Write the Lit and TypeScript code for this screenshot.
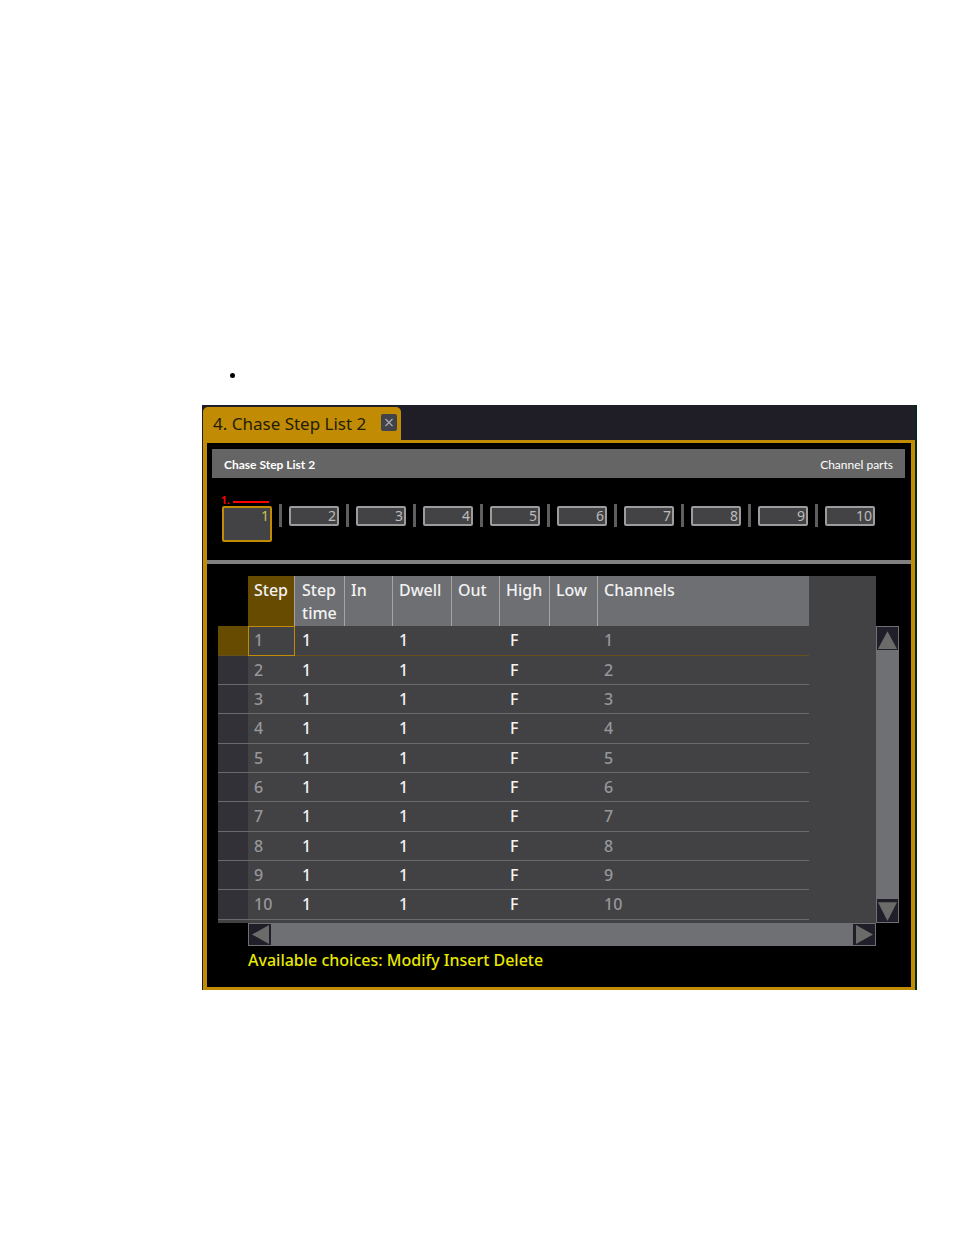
import { LitElement, html, css, svg } from "lit";
import { customElement, state } from "lit/decorators.js";

type Direction = "up" | "down" | "left" | "right";

const ARROWS: Record<Direction, string> = {
  up: "M11 4 L21 21 H1 Z",
  down: "M1 3 H21 L11 21 Z",
  left: "M3 11 L20 1 V21 Z",
  right: "M3 1 L20 11 L3 21 Z",
};

interface Step {
  step: number;
  time: string;
  fadeIn: string;
  dwell: string;
  fadeOut: string;
  high: string;
  low: string;
  channels: string;
}

const STEPS: Step[] = Array.from({ length: 10 }, (_, i) => ({
  step: i + 1,
  time: "1",
  fadeIn: "",
  dwell: "1",
  fadeOut: "",
  high: "F",
  low: "",
  channels: String(i + 1),
}));

@customElement("scroll-bar")
export class ScrollBar extends LitElement {
  static properties = { vertical: { type: Boolean, reflect: true } };
  declare vertical: boolean;

  static styles = css`
    :host {
      display: flex;
      box-sizing: border-box;
      background: #6f7073;
    }
    :host([vertical]) {
      flex-direction: column;
    }
    .track {
      flex: 1;
    }
    .arrow {
      display: block;
      box-sizing: border-box;
      width: 24px;
      height: 23px;
      padding: 0;
      border: 1px solid #6f7073;
      background: #1f1e29;
    }
    :host([vertical]) .arrow {
      width: 23px;
      height: 25px;
    }
    .glyph {
      display: block;
      width: 100%;
      height: 100%;
      fill: #6b6b69;
    }
  `;

  private arrow(direction: Direction) {
    return html`<button class="arrow" type="button" aria-label="Scroll ${direction}">
      <svg class="glyph" viewBox="0 0 22 22" preserveAspectRatio="none" aria-hidden="true">
        ${svg`<path d=${ARROWS[direction]} />`}
      </svg>
    </button>`;
  }

  render() {
    return html`
      ${this.arrow(this.vertical ? "up" : "left")}
      <div class="track"></div>
      ${this.arrow(this.vertical ? "down" : "right")}
    `;
  }
}

@customElement("app-root")
export class AppRoot extends LitElement {
  @state() private selected = 1;

  static styles = css`
    :host {
      display: block;
      background: #fff;
      font-family: "Noto Sans", "Open Sans", sans-serif;
    }
    .page {
      padding: 365px 37px 0 202px;
    }
    .notes {
      margin: 0 0 20px;
      padding: 0 0 0 44px;
      font: 16px/20px "Liberation Serif", serif;
      color: #000;
    }
    .window {
      padding: 2px 0 0 1px;
      background: #1f1e27;
      border-right: 2px solid #042a1c;
    }
    button {
      font-family: inherit;
      cursor: pointer;
    }
    .tab {
      display: flex;
      align-items: flex-start;
      justify-content: space-between;
      box-sizing: border-box;
      width: 198px;
      height: 33px;
      padding: 7px 4px 0 10px;
      border-radius: 5px 5px 0 0;
      background: #c18c04;
    }
    .tab-name {
      padding: 0;
      border: 0;
      background: none;
      color: #241d08;
      font-size: 17px;
      line-height: 20px;
      white-space: nowrap;
    }
    .close {
      width: 16px;
      height: 17px;
      padding: 0;
      border: 0;
      border-radius: 2px;
      background: #42434a;
    }
    .close-glyph {
      display: block;
      width: 16px;
      height: 17px;
      stroke: #a9a9ac;
      stroke-width: 1.3;
    }
    .panel {
      border: 4px solid #c18c04;
      border-top-width: 3px;
      border-bottom-width: 3px;
      background: #000;
    }
    .title-bar {
      display: flex;
      justify-content: space-between;
      align-items: center;
      height: 29px;
      margin: 6px 6px 0 5px;
      padding: 2px 12px 0;
      box-sizing: border-box;
      background: #656565;
      color: #fff;
      font-family: Lato, sans-serif;
      font-size: 12px;
      line-height: 16px;
    }
    .title {
      margin: 0;
      font-size: 12px;
      font-weight: 700;
    }
    .cues {
      display: flex;
      align-items: flex-start;
      gap: 7px;
      height: 56px;
      padding: 26px 15px 0;
      overflow: hidden;
    }
    .divider {
      width: 3px;
      height: 23px;
      background: #5e5e5e;
    }
    .cue-slot {
      position: relative;
      padding-top: 2px;
    }
    .cue {
      display: block;
      box-sizing: border-box;
      width: 50px;
      height: 20px;
      padding: 0 1px 0 0;
      border: 2px solid #9c9c9e;
      border-radius: 2px;
      background: #434345;
      color: #bcbcbc;
      font-size: 14px;
      line-height: 16px;
      text-align: right;
    }
    .cue.active {
      display: flex;
      justify-content: flex-end;
      height: 36px;
      border-color: #c18c04;
      color: #c9c453;
    }
    .part {
      position: absolute;
      left: -1px;
      right: 3px;
      top: -10px;
      display: flex;
      align-items: center;
      gap: 3px;
      color: #f00;
      font-size: 10px;
      font-weight: 700;
      line-height: 12px;
    }
    .part-line {
      flex: 1;
      height: 2px;
      margin-top: 3px;
      background: #f00;
    }
    .rule {
      height: 4px;
      margin: 0;
      border: 0;
      background: #808080;
    }
    .body {
      padding: 12px 12px 15px 11px;
    }
    .sheet {
      display: flex;
    }
    .grid-wrap {
      flex: 1;
      min-width: 0;
      padding-bottom: 3px;
      background: #424244;
    }
    .grid {
      width: 100%;
      border-collapse: separate;
      border-spacing: 0;
      table-layout: fixed;
      font-size: 16px;
      line-height: 23px;
    }
    .grid th,
    .grid td {
      box-sizing: border-box;
      padding: 0 0 0 6px;
      text-align: left;
      white-space: nowrap;
    }
    .c-gutter { width: 30px; }
    .c-step { width: 47px; }
    .c-time { width: 50px; }
    .c-in { width: 48px; }
    .c-dwell { width: 59px; }
    .c-out { width: 48px; }
    .c-high { width: 50px; }
    .c-low { width: 48px; }
    .c-channels { width: 211px; }
    .head th {
      height: 50px;
      padding: 3px 0 1px 6px;
      border-right: 1px solid #a4a4a6;
      background: #6e6f72;
      color: #f2f2f2;
      font-weight: 500;
      vertical-align: top;
    }
    .head th.wrap {
      padding-left: 7px;
      white-space: normal;
    }
    .head th.current {
      background: #664b00;
    }
    .head th.last {
      border-right: 0;
    }
    .head .corner {
      border: 0;
      background: #000;
    }
    .grid .blank {
      border: 0;
      background: #424244;
    }
    .row td,
    .row th {
      height: 29px;
      border-bottom: 1px solid #6a6a6d;
      color: #f4f4f4;
      font-weight: 500;
    }
    .row:nth-child(3n + 1) td,
    .row:nth-child(3n + 1) th {
      height: 30px;
    }
    .row .gutter {
      background: #333138;
    }
    .row .muted {
      color: #97979a;
      font-weight: 500;
    }
    .row .time {
      padding-left: 7px;
    }
    .row .level {
      padding-left: 10px;
    }
    .row.selected td {
      border-bottom-color: #66501c;
    }
    .row.selected .gutter {
      background: #664b00;
    }
    .row.selected .cursor {
      padding: 0 0 1px 5px;
      border: 1px solid #c18c04;
    }
    .v-bar {
      width: 23px;
      margin-top: 50px;
    }
    .h-bar {
      height: 23px;
      margin: 0 23px 0 30px;
    }
    .choices {
      margin: 3px 0 0 30px;
      color: #e9e900;
      font-size: 16px;
      font-weight: 500;
      line-height: 23px;
    }
  `;

  private cue(n: number) {
    const active = n === this.selected;
    return html`
      ${n > 1 ? html`<div class="divider"></div>` : ""}
      <div class="cue-slot">
        ${active ? html`<div class="part">${n}.<span class="part-line"></span></div>` : ""}
        <button
          class="cue ${active ? "active" : ""}"
          type="button"
          @click=${() => (this.selected = n)}
        >${n}</button>
      </div>
    `;
  }

  private row(s: Step) {
    return html`<tr class="row ${s.step === this.selected ? "selected" : ""}">
      <td class="gutter"></td>
      <th class="muted cursor" scope="row">${s.step}</th>
      <td class="time">${s.time}</td>
      <td>${s.fadeIn}</td>
      <td>${s.dwell}</td>
      <td>${s.fadeOut}</td>
      <td class="level">${s.high}</td>
      <td>${s.low}</td>
      <td class="muted">${s.channels}</td>
      <td class="blank"></td>
    </tr>`;
  }

  render() {
    return html`
      <main class="page">
        <ul class="notes"><li></li></ul>
        <section class="window">
          <div class="tab">
            <button class="tab-name" type="button">4. Chase Step List 2</button>
            <button class="close" type="button" aria-label="Close">
              <svg class="close-glyph" viewBox="0 0 16 17" aria-hidden="true">
                <path d="M4.5 5 L11.5 12 M11.5 5 L4.5 12" />
              </svg>
            </button>
          </div>
          <div class="panel">
            <header class="title-bar">
              <h1 class="title">Chase Step List 2</h1>
              <span>Channel parts</span>
            </header>
            <div class="cues">${STEPS.map((s) => this.cue(s.step))}</div>
            <hr class="rule" />
            <div class="body">
              <div class="sheet">
                <div class="grid-wrap">
                  <table class="grid">
                    <colgroup>
                      <col class="c-gutter" />
                      <col class="c-step" />
                      <col class="c-time" />
                      <col class="c-in" />
                      <col class="c-dwell" />
                      <col class="c-out" />
                      <col class="c-high" />
                      <col class="c-low" />
                      <col class="c-channels" />
                      <col />
                    </colgroup>
                    <thead>
                      <tr class="head">
                        <td class="corner"></td>
                        <th class="current" scope="col">Step</th>
                        <th class="wrap" scope="col">Step time</th>
                        <th scope="col">In</th>
                        <th scope="col">Dwell</th>
                        <th scope="col">Out</th>
                        <th scope="col">High</th>
                        <th scope="col">Low</th>
                        <th class="last" scope="col">Channels</th>
                        <td class="blank"></td>
                      </tr>
                    </thead>
                    <tbody>
                      ${STEPS.map((s) => this.row(s))}
                    </tbody>
                  </table>
                </div>
                <scroll-bar class="v-bar" vertical></scroll-bar>
              </div>
              <scroll-bar class="h-bar"></scroll-bar>
              <p class="choices">Available choices: Modify Insert Delete</p>
            </div>
          </div>
        </section>
      </main>
    `;
  }
}
